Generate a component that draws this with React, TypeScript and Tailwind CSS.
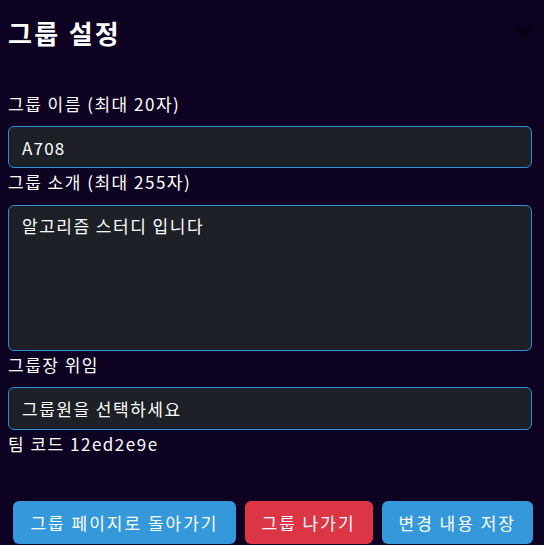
import React from 'react'

const font = { fontFamily: "'Noto Sans CJK KR', 'Noto Sans', sans-serif" }

export default function App() {
  return (
    <div className="min-h-screen bg-[#0d0221] text-white pl-2 pr-3 text-[17px] tracking-[1.5px]" style={font}>
      <div className="flex items-start justify-between pt-[17px]">
        <h2 className="text-[26px] font-semibold leading-[32px] tracking-[2.3px]">그룹 설정</h2>
        <button className="mt-[8px] mr-[-1px] w-[18px] h-[18px] text-[#05000f]" aria-label="close">
          <svg viewBox="0 0 18 18" className="w-[18px] h-[18px]" fill="none" stroke="currentColor" strokeWidth="2">
            <path d="M1 1 L17 17 M17 1 L1 17" />
          </svg>
        </button>
      </div>

      <div className="mt-[43px] flex flex-col">
        <label className="leading-6 mb-[10px]">그룹 이름 (최대 20자)</label>
        <input
          className="h-[42px] rounded-md border border-[#2f8fdc] bg-[#1d2027] px-[13px] text-[17px] tracking-[1.2px] text-white outline-none"
          defaultValue="A708"
        />
        <label className="leading-6 mt-[2px] mb-[11px]">그룹 소개 (최대 255자)</label>
        <textarea
          className="h-[146px] resize-none rounded-md border border-[#2f8fdc] bg-[#1d2027] px-[13px] py-[7px] text-[17px] tracking-[1.5px] text-white outline-none"
          defaultValue="알고리즘 스터디 입니다"
        />
        <label className="leading-6 mt-[2px] mb-[10px]">그룹장 위임</label>
        <div className="flex h-[43px] items-center rounded-md border border-[#2f8fdc] bg-[#1d2027] px-[13px]">
          그룹원을 선택하세요
        </div>
        <p className="leading-6 mt-[2px]">팀 코드 12ed2e9e</p>
      </div>

      <div className="mt-[45px] mr-[-1px] flex justify-end gap-[9px] tracking-[2px]">
        <button className="h-[43px] rounded-md bg-[#3498db] px-[17px] text-white">그룹 페이지로 돌아가기</button>
        <button className="h-[43px] rounded-md bg-[#dc3545] px-[17px] text-white">그룹 나가기</button>
        <button className="h-[43px] rounded-md bg-[#3498db] px-[17px] text-white">변경 내용 저장</button>
      </div>
    </div>
  )
}
